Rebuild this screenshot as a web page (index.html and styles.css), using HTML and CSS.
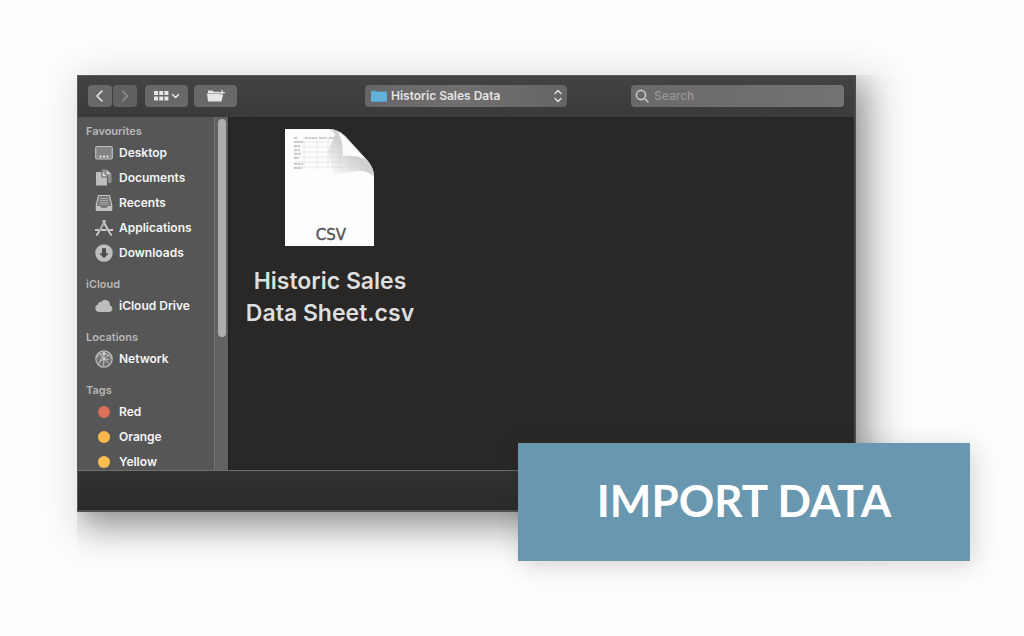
FILE: index.html
```html
<!DOCTYPE html>
<html lang="en">
<head>
<meta charset="utf-8">
<title>Import data</title>
<link rel="stylesheet" href="styles.css">
</head>
<body>
<main class="stage">
  <section class="window" aria-label="Open file">
    <div class="panel">
      <header class="toolbar">
        <div class="history">
          <button class="tool nav" type="button" aria-label="Back"><svg width="12" height="14" viewBox="0 0 12 14"><path d="M8 2 3 7l5 5" class="stroke"/></svg></button>
          <button class="tool nav dim" type="button" aria-label="Forward"><svg width="12" height="14" viewBox="0 0 12 14"><path d="M3.500 2l5 5-5 5" class="stroke"/></svg></button>
        </div>
        <button class="tool wide" type="button" aria-label="View options">
          <svg width="26" height="12" viewBox="0 0 26 12"><path class="fill" d="M0 1h4v4H0zM5.200 1h4v4h-4zM10.400 1h4v4h-4zM0 6.500h4v4H0zM5.200 6.500h4v4h-4zM10.400 6.500h4v4h-4z"/><path class="stroke" d="m18.500 4.500 3 3 3-3"/></svg>
        </button>
        <button class="tool wide" type="button" aria-label="New folder">
          <svg width="18" height="14" viewBox="0 0 18 14"><path class="fill" d="M1 1.500h4.500l1 1.200H12v1.200H1zM0 4.600h13.600v1.500H16L14.500 12.500H1z"/><path class="stroke thin" d="M15 1.500v4.500M12.700 3.700h4.600"/></svg>
        </button>
        <div class="location">
          <svg class="folder" width="16" height="14" viewBox="0 0 16 14"><path fill="#579fc3" d="M0 1.500h5l1 1h10V13H0z"/><path fill="#62b2d8" d="M0 3h16v9H0z"/></svg>
          <select class="location-select" aria-label="Location"><option>Historic Sales Data</option></select>
          <svg class="updown" width="10" height="16" viewBox="0 0 10 16"><path class="stroke" d="M2 5.500l3-3 3 3M2 10.500l3 3 3-3"/></svg>
        </div>
        <div class="search">
          <svg class="lens" width="14" height="14" viewBox="0 0 14 14"><circle class="stroke" cx="6" cy="6" r="4.600"/><path class="stroke" d="m9.500 9.500 3.500 3.500"/></svg>
          <input class="search-input" type="search" placeholder="Search" aria-label="Search">
        </div>
      </header>
      <div class="content">
        <nav class="sidebar" aria-label="Places">
          <div class="places">
            <h2 class="group">Favourites</h2>
            <a class="place" href="#"><svg class="icon" viewBox="0 0 18 18"><rect x=".7" y="2.500" width="16.600" height="12.500" rx="1.500" fill="#818282" stroke="#c0c2c2" stroke-width="1.200"/><path fill="#e5e5e5" d="M4.500 11.500h2v2h-2zM8 11.500h2v2H8zM11.500 11.500h2v2h-2z"/></svg>Desktop</a>
            <a class="place" href="#"><svg class="icon" viewBox="0 0 18 18"><path fill="#8e9090" d="M7 .5h4L16.500 5v9H13V8L9 4H7z"/><path fill="#d0d2d2" d="M11.700.7V5H16z"/><path fill="#bcbebe" d="M1 3h5.500v5.500H12v8H1z"/><path fill="#e0e2e2" d="M7.500 3v4.500H12z"/></svg>Documents</a>
            <a class="place" href="#"><svg class="icon" viewBox="0 0 18 18"><path d="M3.500 1.500h11l2.200 10v5H1.300v-5z" fill="#777878" stroke="#bfc1c1" stroke-width="1.200" stroke-linejoin="round"/><path d="M5 4.500h8M4.800 6.500h8.400M4.600 8.500h8.800M4.500 10.300h9" stroke="#b0b2b2" stroke-width=".8"/><path d="M1.200 12H5l1.500 2h5l1.500-2h3.800v4.500H1.200z" fill="#bfc1c1"/></svg>Recents</a>
            <a class="place" href="#"><svg class="icon" viewBox="0 0 18 18"><path d="M10.200 1.500 3.200 14 1.300 16.500M7.800 1.500l7 12.500 1.900 2.500M0 11h3.600M6.200 11h5.300M14.400 11H18" fill="none" stroke="#c9caca" stroke-width="2"/><path d="M9 3.500 4 12.500" stroke="#777" stroke-width=".6"/></svg>Applications</a>
            <a class="place" href="#"><svg class="icon" viewBox="0 0 18 18"><circle cx="9" cy="9" r="8.700" fill="#bdbfbf"/><path fill="#4d4e4e" d="M7 4.300h4v5h2.800L9 14.200 4.200 9.300H7z"/></svg>Downloads</a>
            <h2 class="group">iCloud</h2>
            <a class="place" href="#"><svg class="icon" viewBox="0 0 18 18"><path fill="#bcbebe" d="M4 15a3.900 3.900 0 0 1-1.200-7.500A2.700 2.700 0 0 1 6.300 5a4.700 4.700 0 0 1 8.600 3.200A3.500 3.500 0 0 1 14.500 15z"/></svg>iCloud Drive</a>
            <h2 class="group">Locations</h2>
            <a class="place" href="#"><svg class="icon" viewBox="0 0 18 18"><circle cx="9" cy="9" r="8.200" fill="#717272" stroke="#bdbfbf" stroke-width="1.200"/><path d="M9 3.500 3.500 14M9 3.500V9M9 9l5.500 5M5 4l4 5M1.500 8l3-4 4.500-.5L14 5l2.500 4M5 11.500 9 9l5 .5M14 5l-5 4M9 9l-.5 7" fill="none" stroke="#c5c7c7" stroke-width=".9"/><circle cx="9" cy="3.500" r="1.400" fill="#d0d2d2"/><circle cx="9" cy="9" r="1.300" fill="#d0d2d2"/></svg>Network</a>
            <h2 class="group">Tags</h2>
            <a class="place" href="#"><span class="icon tag red"></span>Red</a>
            <a class="place" href="#"><span class="icon tag orange"></span>Orange</a>
            <a class="place" href="#"><span class="icon tag yellow"></span>Yellow</a>
          </div>
          <div class="track"><div class="thumb"></div></div>
        </nav>
        <div class="files">
          <figure class="file">
            <svg class="sheet" width="90" height="118" viewBox="0 0 90 118" role="img" aria-label="CSV file">
              <defs>
                <linearGradient id="shade" gradientUnits="userSpaceOnUse" x1="42" y1="45" x2="64" y2="22"><stop offset="0" stop-color="#d8d9d9" stop-opacity="0"/><stop offset="1" stop-color="#cfd0d0"/></linearGradient>
              </defs>
              <path d="M0 0h43c8 0 13 3 18 8l21 23c5 6 7 11 7 17v69H0z" fill="#fdfdfd"/>
              <path d="M8 13h50M8 18h50M8 23h50M8 28h62M8 33h65M8 38h65M19 8v33M32 8v33M43 8v33M55 8v33M66 28v13" fill="none" stroke="#e6e8e8"/>
              <path d="M9 9h4M20 9h12M34 9h8M44 9h11M9 13h9M9 17h6M9 21h6M9 25h7M9 29h5M9 35h9M9 39h8" stroke="#b9bbbb" stroke-width="1.500" stroke-dasharray="3 .5"/>
              <path d="M43 0c8 0 13 3 18 8l21 23c5 6 7 11 7 17-4-5-10-6-16-6L48 45 43 22 50 6C49 3 47 1 43 0z" fill="url(#shade)"/>
              <path d="M53 3c4 7 5 15 5 24 8-1 15 0 22 3L61 9C58 6 56 4 53 3z" fill="#fbfbfb"/>
            <text class="ext" x="46" y="111" text-anchor="middle">CSV</text>
            </svg>
            <figcaption class="file-name">Historic Sales<br>Data Sheet.csv</figcaption>
          </figure>
        </div>
      </div>
      <footer class="actions"></footer>
    </div>
  </section>
  <h1 class="banner">IMPORT DATA</h1>
</main>
</body>
</html>
```
FILE: styles.css
```css
* { box-sizing: border-box; }

body {
  margin: 0;
  background: #fdfdfd;
  font-family: Inter, "Liberation Sans", sans-serif;
}

.stage {
  position: relative;
  padding: 75px 168px 124px 77px;
}

.window {
  position: relative;
  box-shadow: 12px 12px 36px 12px rgba(0, 0, 0, 0.14);
}

/* Directional shadow that falls to the right and below only */
.window::before {
  content: "";
  position: absolute;
  inset: 0;
  box-shadow: 4px 8px 32px rgba(0, 0, 0, 0.38);
  clip-path: inset(0 -80px -80px 0);
}

.panel {
  position: relative;
  display: flex;
  flex-direction: column;
  border: 1px solid #5c5c5b;
  border-right: 2px solid #4a4a4a;
  border-bottom: 2px solid #515151;
  background: #292827;
}

.toolbar {
  display: flex;
  align-items: center;
  height: 41px;
  padding: 0 10px 2px;
  background: linear-gradient(#444341, #3b3a39);
}

.tool {
  display: flex;
  align-items: center;
  justify-content: center;
  height: 22px;
  padding: 0;
  border: 0;
  border-radius: 4px;
  background: #696767;
  color: #e6e6e6;
}

.history { display: flex; gap: 1px; }
.nav { width: 24px; }
.dim { background: #626060; color: #949292; }
.wide { width: 43px; margin-left: 8px; }
.wide + .wide { margin-left: 6px; }

.stroke {
  fill: none;
  stroke: currentColor;
  stroke-width: 1.6;
  stroke-linecap: round;
  stroke-linejoin: round;
}
.thin { stroke-width: 1.3; }
.fill { fill: currentColor; }

.location {
  position: relative;
  width: 202px;
  margin-left: auto;
  color: #dedede;
}

.location-select {
  display: block;
  width: 100%;
  height: 22px;
  padding: 0 24px 0 26px;
  border: 0;
  border-radius: 4px;
  appearance: none;
  background: linear-gradient(90deg, #676565, #716f6f 50%, #656363);
  color: #e4e4e4;
  font: 600 12px/22px Inter, "Liberation Sans", sans-serif;
}

.folder { position: absolute; left: 6px; top: 4px; }
.updown { position: absolute; right: 4px; top: 3px; }

.search {
  position: relative;
  width: 213px;
  margin-left: 64px;
  color: #c6c6c6;
}

.search-input {
  display: block;
  width: 100%;
  height: 22px;
  padding: 0 8px 0 23px;
  border: 0;
  border-radius: 4px;
  appearance: none;
  background: linear-gradient(90deg, #6a6868, #747272);
  color: #e4e4e4;
  font: 500 12px/22px Inter, "Liberation Sans", sans-serif;
}
.search-input::placeholder { color: #979696; opacity: 1; }
.lens { position: absolute; left: 4px; top: 4px; }

.content { display: flex; }

.sidebar {
  display: flex;
  width: 151px;
  border-right: 1px solid #1d1d1d;
  background: #565656;
}

.places {
  flex: 1;
  height: 353px;
  padding-top: 5px;
  overflow: hidden;
}

.group {
  height: 18px;
  margin: 10px 0 0;
  padding-left: 8px;
  color: #b9b9b9;
  font-size: 11px;
  font-weight: 600;
  line-height: 18px;
}
.group:first-child { margin-top: 0; }

.place {
  display: flex;
  align-items: center;
  gap: 6px;
  height: 25px;
  padding-left: 17px;
  color: #f4f4f4;
  font-size: 12px;
  font-weight: 600;
  text-decoration: none;
  white-space: nowrap;
}

.icon {
  flex: none;
  width: 18px;
  height: 18px;
}

.tag {
  border: 3px solid transparent;
  border-radius: 9px;
  background-clip: padding-box;
}
.red { background-color: #dc7057; }
.orange { background-color: #fbb94d; }
.yellow { background-color: #fabd50; }

.track {
  width: 14px;
  padding: 2px 2px 0 3px;
  border-left: 1px solid #747474;
  background: #626261;
}

.thumb {
  height: 218px;
  border-radius: 4px;
  background: #acaead;
}

.files { flex: 1; padding: 12px 14px; }

.file {
  display: flex;
  flex-direction: column;
  align-items: center;
  width: 174px;
  margin: 0;
}

.sheet { display: block; }

.ext {
  fill: #555;
  stroke: #555;
  stroke-width: 0.4px;
  font: 15px "DejaVu Sans", sans-serif;
}

.file-name {
  margin-top: 18px;
  color: #dedede;
  font-size: 23px;
  font-weight: 600;
  line-height: 32px;
  text-align: center;
  white-space: nowrap;
}

.actions {
  height: 40px;
  border-top: 1px solid #6f6f6e;
  background: linear-gradient(#333, #2a2a2a);
}

.banner {
  position: absolute;
  right: 54px;
  bottom: 75px;
  display: flex;
  align-items: center;
  justify-content: center;
  width: 452px;
  height: 118px;
  margin: 0;
  padding-bottom: 4px;
  background: #6a97b0;
  box-shadow: 4px 4px 24px rgba(0, 0, 0, 0.16);
  color: #fff;
  font: bold 44px/56px Lato, sans-serif;
}
```
